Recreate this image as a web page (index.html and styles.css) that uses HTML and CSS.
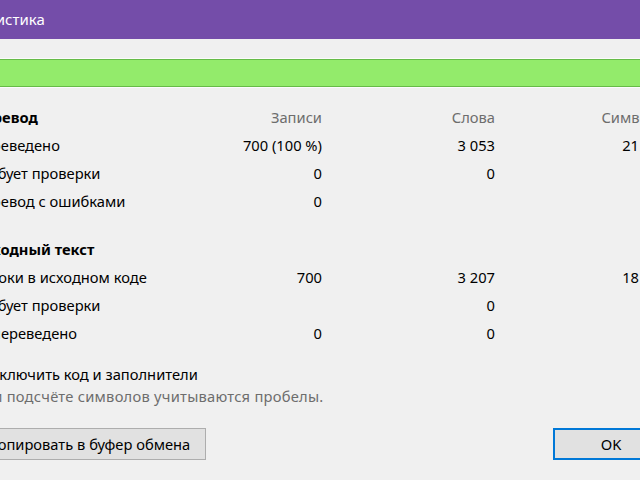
FILE: index.html
```html
<!DOCTYPE html>
<html lang="ru">
<head>
<meta charset="utf-8">
<title>Статистика</title>
<link rel="stylesheet" href="styles.css">
</head>
<body>
<div class="titlebar"><span class="title">Статистика</span></div>
<div class="dialog">
  <div class="progress"><div class="fill"></div></div>
  <div class="stats">
    <div class="head label">Перевод</div>
    <div class="colhead">Записи</div>
    <div class="colhead">Слова</div>
    <div class="colhead">Символы</div>

    <div class="label">Переведено</div>
    <div class="num">700 (100 %)</div>
    <div class="num">3 053</div>
    <div class="num">21 430</div>

    <div class="label">Требует проверки</div>
    <div class="num">0</div>
    <div class="num">0</div>
    <div class="num">0</div>

    <div class="label">Перевод с ошибками</div>
    <div class="num">0</div>
    <div class="num"></div>
    <div class="num"></div>

    <div class="spacer"></div>

    <div class="head label">Исходный текст</div>
    <div class="num"></div>
    <div class="num"></div>
    <div class="num"></div>

    <div class="label">Строки в исходном коде</div>
    <div class="num">700</div>
    <div class="num">3 207</div>
    <div class="num">18 906</div>

    <div class="label">Требует проверки</div>
    <div class="num"></div>
    <div class="num">0</div>
    <div class="num">0</div>

    <div class="label">Непереведено</div>
    <div class="num">0</div>
    <div class="num">0</div>
    <div class="num">0</div>
  </div>
  <label class="check"><span class="box"></span><span>Исключить код и заполнители</span></label>
  <div class="note">При подсчёте символов учитываются пробелы.</div>
  <div class="buttons">
    <button class="btn copy">Копировать в буфер обмена</button>
    <button class="btn ok">OK</button>
  </div>
</div>
</body>
</html>
```
FILE: styles.css
```css
html, body {
  margin: 0;
  padding: 0;
  background: #f0f0f0;
  overflow: hidden;
  width: 640px;
  height: 480px;
}
body {
  font-family: "Noto Sans", "Liberation Sans", sans-serif;
  font-size: 14.7px;
  color: #000;
}
.titlebar {
  height: 39px;
  background: #744da9;
  color: #fff;
  display: flex;
  align-items: center;
  margin-left: -36px;
}
.title {
  font-size: 15px;
  padding-bottom: 2px;
}
.dialog {
  margin-left: -27px;
  width: 700px;
}
.progress {
  margin-top: 19px;
  margin-left: -4px;
  height: 30px;
  border: 1px solid #fbfbfb;
  box-sizing: border-box;
  width: 720px;
}
.fill {
  height: 100%;
  box-sizing: border-box;
  background: #93eb6b;
  border: 1px solid #66bb48;
}
.stats {
  display: grid;
  grid-template-columns: 199px 150px 173px 173px;
  grid-template-rows: repeat(4, 28px) 20px repeat(4, 28px);
  margin-top: 15px;
  align-items: center;
}
.label { white-space: nowrap; }
.head { font-weight: bold; }
.colhead { text-align: right; color: #6d6d6d; }
.num { text-align: right; }
.spacer { grid-column: 1 / -1; }
.check {
  display: flex;
  align-items: center;
  gap: 7px;
  margin-top: 16px;
  margin-left: -12px;
  height: 22px;
}
.box {
  width: 13px;
  height: 13px;
  border: 1px solid #333;
  background: #fff;
  box-sizing: border-box;
}
.note {
  color: #6d6d6d;
  height: 22px;
  line-height: 22px;
  letter-spacing: 0.25px;
}
.buttons {
  display: flex;
  justify-content: space-between;
  margin-top: 21px;
  width: 696px;
}
.btn {
  font-family: inherit;
  font-size: 14.7px;
  height: 32px;
  background: #e1e1e1;
  border: 1px solid #adadad;
  color: #000;
  padding: 0;
  box-sizing: border-box;
}
.copy {
  width: 233px;
}
.ok {
  width: 116px;
  border: 2px solid #0078d7;
}
```
